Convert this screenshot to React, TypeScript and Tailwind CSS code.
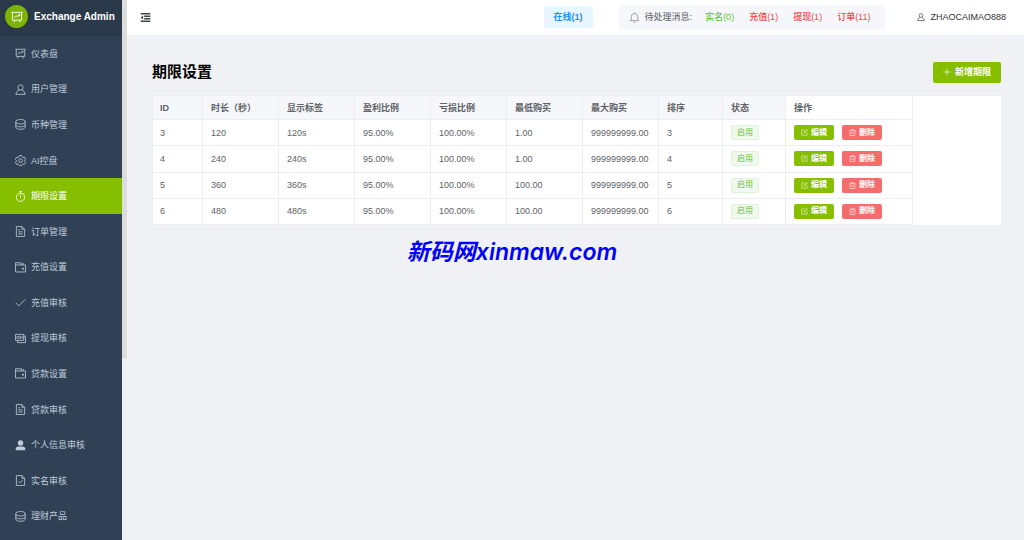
import React from 'react';
import clsx from 'clsx';

type IconName =
  | 'board'
  | 'user'
  | 'coin'
  | 'setting'
  | 'timer'
  | 'document'
  | 'wallet'
  | 'check'
  | 'money'
  | 'userSolid'
  | 'documentChecked'
  | 'bell'
  | 'fold'
  | 'plus'
  | 'edit'
  | 'trash';

const icons: Record<IconName, React.ReactNode> = {
  board: (
    <>
      <path d="M0.5 1.8h15M1.8 1.8v10.4h12.4V1.8M5 12.2l-1.2 3M11 12.2l1.2 3" />
      <path d="M4.3 9l2.4-2.8 2 1.6 2.8-3M9.6 4.8h2v2" />
    </>
  ),
  user: (
    <>
      <circle cx="8" cy="5" r="3.8" />
      <path d="M1.5 15c0-3.6 2.2-5.6 4.8-6.3M14.5 15c0-3.6-2.2-5.6-4.8-6.3M1 15h14" />
    </>
  ),
  coin: (
    <>
      <ellipse cx="8" cy="4" rx="6.8" ry="3.2" />
      <path d="M1.2 4v7.8C1.2 13.6 4.2 15 8 15s6.8-1.4 6.8-3.2V4" />
      <path d="M1.2 8.8c.8 1.8 3.6 2.6 6.8 2.6s6-.8 6.8-2.6" />
    </>
  ),
  setting: (
    <>
      <path d="M6.3.8h3.4l.6 2 1.5.9 2-.5 1.7 3-1.4 1.4v1.4l1.4 1.5-1.7 3-2-.5-1.5.9-.6 1.5H6.3l-.6-1.5-1.5-.9-2 .5-1.7-3 1.4-1.5V7.7L.5 6.2l1.7-3 2 .5 1.5-.9z" />
      <circle cx="8" cy="8.2" r="2.6" />
    </>
  ),
  timer: (
    <>
      <circle cx="8" cy="9.2" r="6" />
      <path d="M8 5.5v4M5.8.8h4.4M8 .8v2.4M12.7 3.2l1.3 1.3" />
    </>
  ),
  document: (
    <>
      <path d="M2 .8h8l4 4v10.4H2zM10 .8v4h4" />
      <path d="M4.8 5.5h2.5M4.8 8.5h6.4M4.8 11.5h6.4" />
    </>
  ),
  wallet: (
    <>
      <path d="M.7 4.3V1.2h8.6v3.1M.7 4.3h14.6v10.2H.7zM12 1.2v3.1" />
      <path d="M10.8 8.8v1.8h1.4V8.8z" />
    </>
  ),
  check: <path d="M1 8.5l4.6 4.4L15 3.4" />,
  money: (
    <>
      <path d="M.7 2h12v8.7H.7zM13 4.5h2.3V14H3.5v-3" />
      <path d="M3 4.5v3.8M10.4 4.5v3.8" />
      <circle cx="6.7" cy="6.4" r="1.8" />
    </>
  ),
  userSolid: (
    <>
      <circle cx="8" cy="4.5" r="4" fill="currentColor" stroke="none" />
      <path
        fill="currentColor"
        stroke="none"
        d="M5 9.5h6a4 4 0 0 1 4 4V15H1v-1.5a4 4 0 0 1 4-4z"
      />
    </>
  ),
  documentChecked: (
    <>
      <path d="M2 .8h8l4 4v10.4H2zM10 .8v4h4" />
      <path d="M5 9l2.3 2.3L11.2 7.5" />
    </>
  ),
  bell: (
    <path d="M8 .5v1.8M3.2 12.3V7a4.8 4.8 0 0 1 9.6 0v5.3M1 12.5h14M6.3 14.8h3.4" />
  ),
  fold: (
    <>
      <path strokeWidth="2" d="M1 2.5h14M6 6.2h9M6 9.8h9M1 13.5h14" />
      <path fill="currentColor" stroke="none" d="M4.5 5v6L1 8z" />
    </>
  ),
  plus: <path d="M8 1v14M1 8h14" />,
  edit: (
    <path d="M8.5 2H1.8v12.2H14V7.5M6.5 9.6l.4-2L13.5 1l1.4 1.4-6.6 6.7z" />
  ),
  trash: (
    <path d="M.8 3.8h14.4M5 3.8V1.2h6v2.6M2.5 3.8v11h11v-11M6.2 6.8v5M9.8 6.8v5" />
  )
};

interface IconProps {
  name: IconName;
  className?: string;
}

function Icon({ name, className }: IconProps) {
  return (
    <svg
      viewBox="0 0 16 16"
      fill="none"
      stroke="currentColor"
      strokeWidth="1.2"
      aria-hidden="true"
      className={clsx('shrink-0', className)}
    >
      {icons[name]}
    </svg>
  );
}

const menu: { label: string; icon: IconName; active?: boolean }[] = [
  { label: '仪表盘', icon: 'board' },
  { label: '用户管理', icon: 'user' },
  { label: '币种管理', icon: 'coin' },
  { label: 'AI控盘', icon: 'setting' },
  { label: '期限设置', icon: 'timer', active: true },
  { label: '订单管理', icon: 'document' },
  { label: '充值设置', icon: 'wallet' },
  { label: '充值审核', icon: 'check' },
  { label: '提现审核', icon: 'money' },
  { label: '贷款设置', icon: 'wallet' },
  { label: '贷款审核', icon: 'document' },
  { label: '个人信息审核', icon: 'userSolid' },
  { label: '实名审核', icon: 'documentChecked' },
  { label: '理财产品', icon: 'coin' }
];

const notices = [
  { label: '实名(0)', done: true },
  { label: '充值(1)' },
  { label: '提现(1)' },
  { label: '订单(11)' }
];

const columns = [
  { label: 'ID', width: 'w-[50px]' },
  { label: '时长（秒）', width: 'w-[76px]' },
  { label: '显示标签', width: 'w-[76px]' },
  { label: '盈利比例', width: 'w-[76px]' },
  { label: '亏损比例', width: 'w-[76px]' },
  { label: '最低购买', width: 'w-[76px]' },
  { label: '最大购买', width: 'w-[76px]' },
  { label: '排序', width: 'w-[64px]' },
  { label: '状态', width: 'w-[63px]' }
];

const rows = [
  ['3', '120', '120s', '95.00%', '100.00%', '1.00', '999999999.00', '3'],
  ['4', '240', '240s', '95.00%', '100.00%', '1.00', '999999999.00', '4'],
  ['5', '360', '360s', '95.00%', '100.00%', '100.00', '999999999.00', '5'],
  ['6', '480', '480s', '95.00%', '100.00%', '100.00', '999999999.00', '6']
];

const cellClass =
  'border-r border-b border-[#ebeef5] p-0 pl-2 first:pl-[7px]';

function Sidebar() {
  return (
    <aside className="flex w-[122px] shrink-0 flex-col bg-[#304156] text-[#bfcbd9]">
      <div className="flex h-9 shrink-0 items-center gap-1.5 border-b border-[#263445] bg-[#2b3a4b] pb-0.5 pl-[5px]">
        <span className="flex size-[23px] shrink-0 items-center justify-center rounded-full bg-[#7cb305] text-white shadow">
          <Icon name="board" className="size-[12px]" />
        </span>
        <span className="text-[10px] font-bold whitespace-nowrap text-white">
          Exchange Admin
        </span>
      </div>
      <nav className="flex flex-1 flex-col pb-1.5">
        {menu.map(item => (
          <a
            key={item.label}
            href="#"
            aria-current={item.active ? 'page' : undefined}
            className={clsx(
              'flex min-h-[35px] flex-1 items-center gap-[5px] pl-[15px]',
              item.active && 'bg-[#86bf00] text-white'
            )}
          >
            <Icon name={item.icon} className="size-[11px]" />
            {item.label}
          </a>
        ))}
      </nav>
    </aside>
  );
}

function Header() {
  return (
    <header className="flex h-[35px] shrink-0 items-center bg-white pr-[18px] pb-px pl-[13px]">
      <button type="button" aria-label="折叠菜单" className="mr-auto text-[#40454d]">
        <Icon name="fold" className="size-[11px]" />
      </button>
      <button
        type="button"
        className="mr-[26px] h-[22px] rounded-xs bg-[#e6f7ff] px-[10px] font-bold text-[#1890ff]"
      >
        在线(1)
      </button>
      <div className="mr-8 flex h-[25px] items-center rounded-xs bg-[#f5f7fa] pr-[15px] pl-[10px]">
        <Icon name="bell" className="mr-[5px] size-[11px] text-[#909399]" />
        <span className="mr-[13px] text-[#606266]">待处理消息:</span>
        <div className="flex gap-[15px]">
          {notices.map(notice => (
            <a
              key={notice.label}
              href="#"
              className={clsx(
                'font-medium',
                notice.done ? 'text-[#67c23a]' : 'text-[#f5484d]'
              )}
            >
              {notice.label}
            </a>
          ))}
        </div>
      </div>
      <button type="button" className="flex items-center gap-[5px] text-[#303133]">
        <Icon name="user" className="size-[8px]" />
        ZHAOCAIMAO888
      </button>
    </header>
  );
}

function TermTable() {
  return (
    <table className="h-[130px] w-full table-fixed border-separate border-spacing-0 border-t border-l border-[#ebeef5] bg-white text-left text-[#606266]">
      <thead>
        <tr className="h-6">
          {columns.map(column => (
            <th
              key={column.label}
              className={clsx(
                cellClass,
                'bg-[#f5f7fa] font-bold whitespace-nowrap',
                column.width
              )}
            >
              {column.label}
            </th>
          ))}
          <th className={clsx(cellClass, 'w-[127px] font-bold')}>操作</th>
          <td className="p-0" />
        </tr>
      </thead>
      <tbody>
        {rows.map(row => (
          <tr key={row[0]}>
            {row.map((cell, index) => (
              <td key={index} className={cellClass}>
                {cell}
              </td>
            ))}
            <td className={cellClass}>
              <span className="flex h-[15px] w-[28px] items-center justify-center rounded-xs border border-[#e1f3d8] bg-[#f0f9eb] text-[8px] text-[#67c23a]">
                启用
              </span>
            </td>
            <td className={cellClass}>
              <div className="flex gap-2 text-[8px] font-bold text-white">
                <button
                  type="button"
                  className="flex h-[15px] w-10 items-center justify-center gap-[3px] rounded-xs bg-[#86bf00]"
                >
                  <Icon name="edit" className="size-[7px]" />
                  编辑
                </button>
                <button
                  type="button"
                  className="flex h-[15px] w-10 items-center justify-center gap-[3px] rounded-xs bg-[#f56c6c]"
                >
                  <Icon name="trash" className="size-[7px]" />
                  删除
                </button>
              </div>
            </td>
            <td className="p-0" />
          </tr>
        ))}
      </tbody>
    </table>
  );
}

export default function App() {
  return (
    <div className="relative flex min-h-screen bg-[#f0f1f5] font-['Liberation_Sans','Noto_Sans_CJK_SC',sans-serif] text-[9px] leading-[14px]">
      <Sidebar />
      <div className="w-[5px] shrink-0">
        <div className="h-[359px] rounded-b-xs bg-[#dcdcdd]" />
      </div>
      <div className="flex min-w-0 flex-1 flex-col">
        <Header />
        <main className="pt-[26px] pr-[23px] pl-[25px]">
          <div className="mb-3 flex items-center justify-between">
            <h1 className="text-[15px] leading-[22px] font-bold text-black">
              期限设置
            </h1>
            <button
              type="button"
              className="flex h-[21px] items-center gap-1 rounded-xs bg-[#86bf00] px-[10px] font-bold text-white"
            >
              <Icon name="plus" className="size-[8px]" />
              新增期限
            </button>
          </div>
          <TermTable />
        </main>
      </div>
      <p className="pointer-events-none absolute inset-x-0 top-[236px] text-center font-['Inter','Noto_Sans_CJK_SC',sans-serif] text-[23px] leading-8 font-semibold text-[#0000ff] italic">
        新码网xinmaw.com
      </p>
    </div>
  );
}
